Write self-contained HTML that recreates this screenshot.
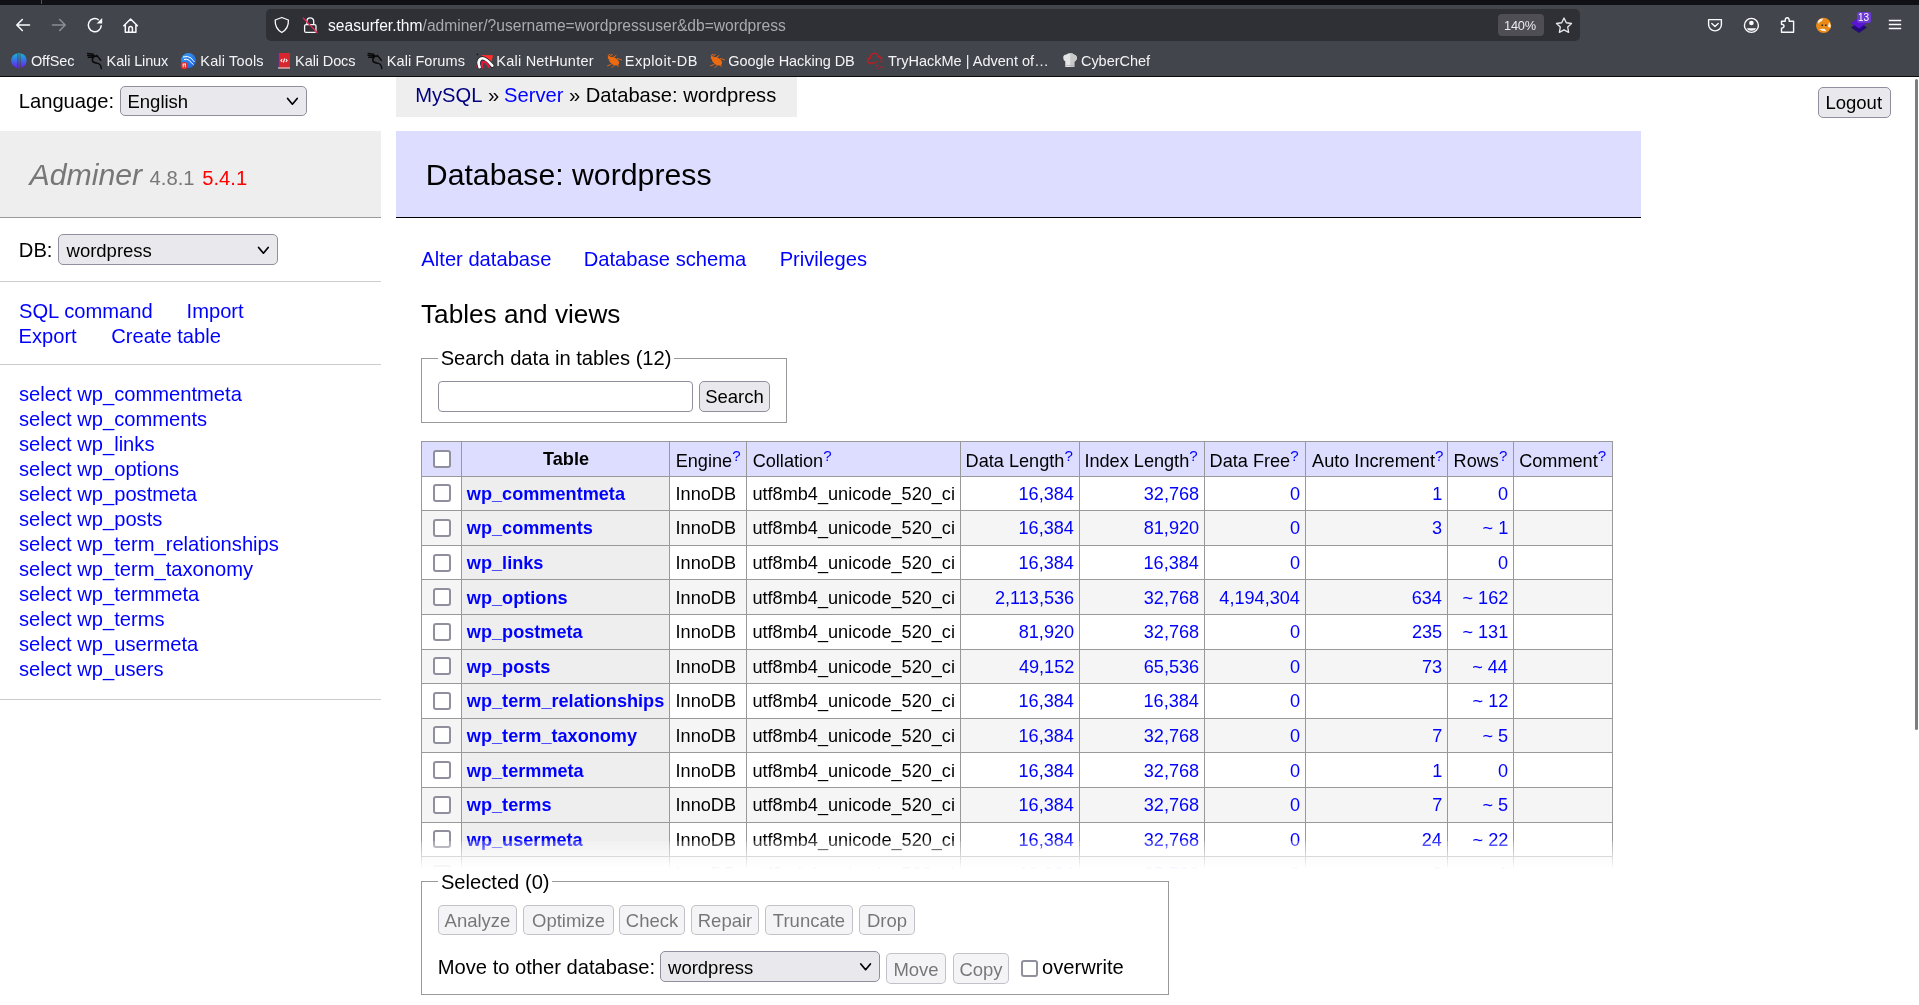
<!DOCTYPE html>
<html><head><meta charset="utf-8"><title>Adminer</title>
<style>
html,body{margin:0;padding:0;background:#fff;overflow:hidden;}
body{width:1919px;height:1005px;position:relative;font-family:"Liberation Sans",sans-serif;}
.t{position:absolute;white-space:pre;line-height:normal;font-family:"Liberation Sans",sans-serif;}
svg{position:absolute;overflow:visible;}
</style></head><body>

<div id="root" style="position:absolute;left:0;top:0;width:1919px;height:1005px;will-change:transform">
<div style="position:absolute;left:0px;top:0px;width:1919px;height:77px;background:#43454d"></div>
<div style="position:absolute;left:0px;top:0px;width:1919px;height:5px;background:#0f1015"></div>
<div style="position:absolute;left:0px;top:76px;width:1919px;height:1px;background:#0b0b0e"></div>
<div style="position:absolute;left:41px;top:0px;width:1px;height:4px;background:#55565c"></div>
<div style="position:absolute;left:266px;top:9px;width:1314px;height:32px;background:#2f3036;border-radius:5px"></div>
<div style="position:absolute;left:1498px;top:14px;width:46px;height:22px;background:#4e4e54;border-radius:4px"></div>
<div class="t" style="left:1504.03px;top:18.00px;font-size:12.80px;color:#ececee;letter-spacing:-0.2px;">140%</div>
<div class="t" style="left:328.07px;top:17.00px;font-size:15.60px;color:#fbfbfe;">seasurfer.thm</div>
<div class="t" style="left:422.57px;top:17.00px;font-size:15.6px;color:#a9a9ae">/adminer/?username=wordpressuser&amp;db=wordpress</div>
<svg style="left:0;top:0" width="1919" height="77" viewBox="0 0 1919 77"><g fill="none" stroke="#fbfbfe" stroke-width="1.6" stroke-linecap="round" stroke-linejoin="round"><path d="M16.8 25 H29.5 M22.3 19.5 L16.8 25 L22.3 30.5"/></g><g fill="none" stroke="#8c8d92" stroke-width="1.6" stroke-linecap="round" stroke-linejoin="round"><path d="M52.5 25 H65.2 M59.7 19.5 L65.2 25 L59.7 30.5"/></g><g fill="none" stroke="#fbfbfe" stroke-width="1.5"><path d="M101.3 25.3 A6.5 6.5 0 1 1 98.8 20.0"/></g><path fill="#fbfbfe" d="M102.2 18 L102.2 23.6 L96.6 23.6 Z"/><g fill="none" stroke="#fbfbfe" stroke-width="1.5" stroke-linejoin="round" stroke-linecap="round"><path d="M123.8 25.8 L130.6 19 L137.4 25.8 M125.3 24.5 V32.2 H135.9 V24.5 M128.8 32 V28.2 A1.8 1.8 0 0 1 132.4 28.2 V32"/></g><path fill="none" stroke="#fbfbfe" stroke-width="1.3" stroke-linejoin="round" d="M281.8 17.5 L275.2 20 Q274.8 28.5 281.8 32.5 Q288.8 28.5 288.4 20 Z"/><g fill="none" stroke="#fbfbfe" stroke-width="1.3"><rect x="304.6" y="24.6" width="11.4" height="7.8" rx="1.5"/><path d="M306.9 24.5 V21.2 A3.4 3.4 0 0 1 313.7 21.2 V24.5"/></g><path stroke="#e22850" stroke-width="1.3" d="M303 17.7 L317.5 33"/><path fill="none" stroke="#e6e6e8" stroke-width="1.35" stroke-linejoin="round" d="M1564.00 18.00 L1566.29 22.74 L1571.51 23.46 L1567.71 27.11 L1568.64 32.29 L1564.00 29.80 L1559.36 32.29 L1560.29 27.11 L1556.49 23.46 L1561.71 22.74 Z"/><g fill="none" stroke="#fbfbfe" stroke-width="1.4" stroke-linejoin="round" stroke-linecap="round"><path d="M1708.6 19.6 H1721.4 V24.5 A6.4 6.4 0 0 1 1708.6 24.5 Z"/><path d="M1711.8 23.6 L1715 26.6 L1718.2 23.6"/></g><g fill="none" stroke="#fbfbfe" stroke-width="1.4"><circle cx="1751.4" cy="25.4" r="7"/></g><circle cx="1751.4" cy="23" r="2.3" fill="#fbfbfe"/><path fill="#fbfbfe" d="M1746.5 28.3 H1756.3 Q1755 30.8 1751.4 30.8 Q1747.8 30.8 1746.5 28.3 Z"/><path fill="none" stroke="#fbfbfe" stroke-width="1.4" stroke-linejoin="round" d="M1781.5 32.3 V28.2 Q1784.2 27.8 1784 26.2 Q1784.2 24.6 1781.5 24.3 V21.3 H1785.2 Q1785 17.7 1787.2 17.7 Q1789.4 17.7 1789.2 21.3 H1793.6 V32.3 Z"/><g stroke="#fbfbfe" stroke-width="1.5"><path d="M1888.8 20.6 H1901.2 M1888.8 24.6 H1901.2 M1888.8 28.6 H1901.2"/></g><circle cx="1823.6" cy="25.4" r="7.6" fill="#e98a16"/><path fill="#f4f1ee" d="M1818 21 Q1820 18 1823 18.5 L1822 21 Q1819.5 21.5 1818.6 24 Z M1829.2 22 Q1831 24 1830.4 28 L1827.8 26.4 Z M1819 29 Q1822 31.5 1826.5 31.2 L1824.5 28.8 Z"/><path fill="#2b2b2b" d="M1821.5 24.5 h1.6 v1.4 h-1.6 Z M1825 24.5 h1.6 v1.4 h-1.6 Z"/><path fill="#230b78" d="M1859 22 L1867 27.5 L1859 33 L1851 27.5 Z"/><path fill="#5a14d6" d="M1859 17.4 L1867 22.9 L1859 28.4 L1851 22.9 Z"/></svg>
<div style="position:absolute;left:1857px;top:12px;width:14px;height:11px;background:#6b3ad0;border-radius:2px"></div>
<div class="t" style="left:1858.04px;top:12.00px;font-size:10.00px;color:#fff;">13</div>
<div class="t" style="left:30.91px;top:53.00px;font-size:14.50px;color:#f4f4f6;letter-spacing:-0.078px;">OffSec</div>
<div class="t" style="left:106.61px;top:53.00px;font-size:14.50px;color:#f4f4f6;letter-spacing:-0.136px;">Kali Linux</div>
<div class="t" style="left:200.31px;top:53.00px;font-size:14.50px;color:#f4f4f6;letter-spacing:0.169px;">Kali Tools</div>
<div class="t" style="left:295.11px;top:53.00px;font-size:14.50px;color:#f4f4f6;letter-spacing:-0.104px;">Kali Docs</div>
<div class="t" style="left:386.81px;top:53.00px;font-size:14.50px;color:#f4f4f6;letter-spacing:0.076px;">Kali Forums</div>
<div class="t" style="left:496.31px;top:53.00px;font-size:14.50px;color:#f4f4f6;letter-spacing:0.226px;">Kali NetHunter</div>
<div class="t" style="left:624.81px;top:53.00px;font-size:14.50px;color:#f4f4f6;letter-spacing:0.462px;">Exploit-DB</div>
<div class="t" style="left:728.27px;top:53.00px;font-size:14.50px;color:#f4f4f6;letter-spacing:-0.053px;">Google Hacking DB</div>
<div class="t" style="left:887.97px;top:53.00px;font-size:14.50px;color:#f4f4f6;letter-spacing:0.016px;">TryHackMe | Advent of…</div>
<div class="t" style="left:1080.96px;top:53.00px;font-size:14.50px;color:#f4f4f6;letter-spacing:-0.037px;">CyberChef</div>
<svg style="left:0;top:0" width="1200" height="77" viewBox="0 0 1200 77"><defs><linearGradient id="og" x1="0" y1="0" x2="0" y2="1"><stop offset="0" stop-color="#11b9d8"/><stop offset="1" stop-color="#6a1df0"/></linearGradient><linearGradient id="kt" x1="0" y1="0" x2="1" y2="1"><stop offset="0" stop-color="#3aa0f5"/><stop offset="1" stop-color="#1a5fe0"/></linearGradient></defs><path fill="url(#og)" d="M17.6 53.2 Q11.2 54.5 11.2 60.5 Q11.2 66 17.2 68 Z M20.4 53.2 Q26.6 54.5 26.6 60.5 Q26.6 66 20.8 68 Z"/><rect x="18.4" y="53" width="1.3" height="15.5" fill="url(#og)"/><path fill="none" stroke="#0a0a0a" stroke-width="1.45" stroke-linecap="round" stroke-linejoin="round" d="M87.6 53.5 L93.2 54.3 M87.6 55.5 L93.5 56 M88.4 57.4 L92.8 57 M92.6 54.6 Q95.5 56.8 97.2 56.2 M96.8 55.4 L100.8 60.3 M94.2 56.6 Q91.6 58.6 92.4 61 Q93.6 62.9 97.8 63.4 Q101.0 64.3 101.3 68.6"/><circle cx="188.5" cy="60.5" r="7.4" fill="url(#kt)"/><path fill="none" stroke="#fff" stroke-width="1" d="M183 57 Q188 55.5 191 58 Q193 60.5 194.5 62 M184 59.5 Q187 58.5 189.5 60.5 Q191 63 193.5 64.5"/><circle cx="184.3" cy="65.6" r="3.6" fill="#e22a2a"/><path stroke="#fff" stroke-width="0.9" d="M183.2 64 v3.3 M185.3 64 v3.3 M182.6 64 h3.4"/><rect x="277.5" y="53" width="12.5" height="15.3" fill="#d8262d"/><rect x="277.5" y="53" width="1.2" height="15.3" fill="#1f3e8a"/><rect x="278" y="67.5" width="12" height="1" fill="#eee"/><path fill="none" stroke="#fff" stroke-width="1.1" d="M282.2 59 L280.9 60.5 L282.2 62 M285.8 59 L287.1 60.5 L285.8 62 M284.6 58.5 L283.4 62.5"/><path fill="none" stroke="#0a0a0a" stroke-width="1.45" stroke-linecap="round" stroke-linejoin="round" d="M368.1 53.5 L373.7 54.3 M368.1 55.5 L374.0 56 M368.9 57.4 L373.3 57 M373.1 54.6 Q376.0 56.8 377.7 56.2 M377.3 55.4 L381.3 60.3 M374.7 56.6 Q372.1 58.6 372.9 61 Q374.1 62.9 378.3 63.4 Q381.5 64.3 381.8 68.6"/><path fill="#ff2d2d" d="M481.4 55 L493 55.2 L491 64 Z"/><circle cx="477.6" cy="66.6" r="1.4" fill="#d3123c"/><circle cx="477.4" cy="54.4" r="0.8" fill="#111"/><path fill="none" stroke="#1d1d22" stroke-width="4" stroke-linecap="round" d="M479.6 67.2 Q477.2 61.2 480.8 58.6 Q484.8 56.6 492.3 65.6"/><path fill="none" stroke="#ffffff" stroke-width="2.7" stroke-linecap="round" d="M479.6 67.2 Q477.2 61.2 480.8 58.6 Q484.8 56.6 492.3 65.6"/><path fill="none" stroke="#e3173f" stroke-width="2.1" stroke-linecap="round" d="M482.4 67.4 Q481.2 63.2 483.2 62 Q485.6 61.2 489.2 67"/><g transform="translate(0.0 0)"><ellipse cx="614" cy="61.2" rx="5.6" ry="3.5" transform="rotate(32 614 61.2)" fill="#ee6a10"/><ellipse cx="609.6" cy="58" rx="2" ry="1.6" transform="rotate(32 609.6 58)" fill="#ee6a10"/><path fill="none" stroke="#ee6a10" stroke-width="0.9" stroke-linecap="round" d="M608.3 56.8 Q607 55 610 54.2 M609.5 56.6 Q610 55 612.5 54.6 M611 64.5 L607.5 65.8 M614 65.5 L612 67.5 M617 63.5 L618.2 66.5 M617.5 58.5 L621.5 60 M612.5 58 L616 55.5"/></g><g transform="translate(103.0 0)"><ellipse cx="614" cy="61.2" rx="5.6" ry="3.5" transform="rotate(32 614 61.2)" fill="#ee6a10"/><ellipse cx="609.6" cy="58" rx="2" ry="1.6" transform="rotate(32 609.6 58)" fill="#ee6a10"/><path fill="none" stroke="#ee6a10" stroke-width="0.9" stroke-linecap="round" d="M608.3 56.8 Q607 55 610 54.2 M609.5 56.6 Q610 55 612.5 54.6 M611 64.5 L607.5 65.8 M614 65.5 L612 67.5 M617 63.5 L618.2 66.5 M617.5 58.5 L621.5 60 M612.5 58 L616 55.5"/></g><path fill="none" stroke="#c01c22" stroke-width="1.4" stroke-linejoin="round" d="M874.8 63 H869.6 Q867.5 63 867.6 60.5 Q867.7 58.2 870.3 58 Q870.6 53.4 874.5 53.4 Q877.8 53.4 878.3 56.8 Q881.6 57 881.8 60"/><g fill="#b02027"><rect x="876.2" y="60.8" width="1.6" height="1.6"/><rect x="880.3" y="60.8" width="2" height="1.6"/><rect x="875.2" y="65" width="3" height="1.4"/><rect x="880.2" y="66.5" width="2.5" height="1.4"/><rect x="877.5" y="68" width="1.4" height="1.2"/></g><path fill="#e4e4e4" d="M1065.3 67 V61.5 Q1063 60 1063.2 57.3 Q1063.6 54.4 1066.6 54.5 Q1068.2 52.8 1070.3 53.3 Q1072.2 52.8 1073.8 54.4 Q1076.3 54.6 1076.8 57 Q1077.6 59.6 1074.3 61.8 V67 Z"/><path fill="#c8c8c8" d="M1070.3 53.3 Q1072.2 52.8 1073.8 54.4 Q1076.3 54.6 1076.8 57 Q1077.6 59.6 1074.3 61.8 V67 H1070.3 Z"/><rect x="1065.3" y="65" width="9" height="0.8" fill="#b0b0b0"/></svg>
<div style="position:absolute;left:1915px;top:79px;width:3px;height:651px;background:#7a7e80;border-radius:2px"></div>
<div class="t" style="left:18.75px;top:90.00px;font-size:20.16px;color:#000;">Language:</div>
<div style="position:absolute;left:120px;top:86px;width:187px;height:30px;box-sizing:border-box;background:#e9e9ed;border:1px solid #8f8f9d;border-radius:5px"></div>
<div class="t" style="left:127.48px;top:91.00px;font-size:18.50px;color:#000;">English</div>
<svg style="left:0;top:0" width="1" height="1"><path fill="none" stroke="#000" stroke-width="1.7" stroke-linecap="round" stroke-linejoin="round" d="M287.6 98.5 L292.4 104.2 L297.2 98.5"/></svg>
<div style="position:absolute;left:0px;top:131px;width:381px;height:86px;background:#eee"></div>
<div style="position:absolute;left:0px;top:217px;width:381px;height:1px;background:#999"></div>
<div class="t" style="left:29.59px;top:158.00px;font-size:30.24px;color:#777;font-style:italic;">Adminer</div>
<div class="t" style="left:149.54px;top:167.00px;font-size:20.26px;color:#777;">4.8.1</div>
<div class="t" style="left:202.19px;top:167.00px;font-size:20.26px;color:#f00;">5.4.1</div>
<div class="t" style="left:18.85px;top:239.00px;font-size:20.16px;color:#000;">DB:</div>
<div style="position:absolute;left:58px;top:234px;width:220px;height:31px;box-sizing:border-box;background:#e9e9ed;border:1px solid #8f8f9d;border-radius:5px"></div>
<div class="t" style="left:66.53px;top:240.00px;font-size:18.50px;color:#000;">wordpress</div>
<svg style="left:0;top:0" width="1" height="1"><path fill="none" stroke="#000" stroke-width="1.7" stroke-linecap="round" stroke-linejoin="round" d="M258.6 247.5 L263.4 253.2 L268.2 247.5"/></svg>
<div style="position:absolute;left:0px;top:281px;width:381px;height:1px;background:#ccc"></div>
<div class="t" style="left:18.98px;top:300.00px;font-size:20.16px;color:#0000ff;">SQL command</div>
<div class="t" style="left:186.54px;top:300.00px;font-size:20.16px;color:#0000ff;">Import</div>
<div class="t" style="left:18.45px;top:325.00px;font-size:20.16px;color:#0000ff;">Export</div>
<div class="t" style="left:111.18px;top:325.00px;font-size:20.16px;color:#0000ff;">Create table</div>
<div style="position:absolute;left:0px;top:364px;width:381px;height:1px;background:#ccc"></div>
<div class="t" style="left:18.94px;top:383.00px;font-size:20.16px;color:#0000ff;">select wp_commentmeta</div>
<div class="t" style="left:18.94px;top:408.00px;font-size:20.16px;color:#0000ff;">select wp_comments</div>
<div class="t" style="left:18.94px;top:433.00px;font-size:20.16px;color:#0000ff;">select wp_links</div>
<div class="t" style="left:18.94px;top:458.00px;font-size:20.16px;color:#0000ff;">select wp_options</div>
<div class="t" style="left:18.94px;top:483.00px;font-size:20.16px;color:#0000ff;">select wp_postmeta</div>
<div class="t" style="left:18.94px;top:508.00px;font-size:20.16px;color:#0000ff;">select wp_posts</div>
<div class="t" style="left:18.94px;top:533.00px;font-size:20.16px;color:#0000ff;">select wp_term_relationships</div>
<div class="t" style="left:18.94px;top:558.00px;font-size:20.16px;color:#0000ff;">select wp_term_taxonomy</div>
<div class="t" style="left:18.94px;top:583.00px;font-size:20.16px;color:#0000ff;">select wp_termmeta</div>
<div class="t" style="left:18.94px;top:608.00px;font-size:20.16px;color:#0000ff;">select wp_terms</div>
<div class="t" style="left:18.94px;top:633.00px;font-size:20.16px;color:#0000ff;">select wp_usermeta</div>
<div class="t" style="left:18.94px;top:658.00px;font-size:20.16px;color:#0000ff;">select wp_users</div>
<div style="position:absolute;left:0px;top:699px;width:381px;height:1px;background:#ccc"></div>
<div style="position:absolute;left:396px;top:77px;width:401px;height:40px;background:#eee"></div>
<div class="t" style="left:415.15px;top:84.00px;font-size:20.16px;color:#000080;">MySQL</div>
<div class="t" style="left:482.36px;top:84.00px;font-size:20.16px"> » </div>
<div class="t" style="left:504.03px;top:84.00px;font-size:20.16px;color:#00f">Server</div>
<div class="t" style="left:563.40px;top:84.00px;font-size:20.16px"> » Database: wordpress</div>
<div style="position:absolute;left:1818px;top:87px;width:73px;height:31px;box-sizing:border-box;background:#e9e9ed;border:1px solid #8f8f9d;border-radius:5px"></div>
<div class="t" style="left:1825.48px;top:92.00px;font-size:18.50px;color:#000;">Logout</div>
<div style="position:absolute;left:396px;top:131px;width:1245px;height:86px;background:#ddf"></div>
<div style="position:absolute;left:396px;top:217px;width:1245px;height:1px;background:#000"></div>
<div class="t" style="left:425.82px;top:158.00px;font-size:30.24px;color:#000;">Database: wordpress</div>
<div class="t" style="left:421.36px;top:248.00px;font-size:20.16px;color:#0000ff;">Alter database</div>
<div class="t" style="left:583.75px;top:248.00px;font-size:20.16px;color:#0000ff;">Database schema</div>
<div class="t" style="left:779.65px;top:248.00px;font-size:20.16px;color:#0000ff;">Privileges</div>
<div class="t" style="left:421.01px;top:299.00px;font-size:26.20px;color:#000;">Tables and views</div>
<div style="position:absolute;left:421px;top:358px;width:366px;height:65px;box-sizing:border-box;border:1px solid #999"></div>
<div style="position:absolute;left:437.88px;top:350px;width:236.46px;height:10px;background:#fff"></div>
<div class="t" style="left:440.68px;top:347.00px;font-size:20.16px;color:#000;">Search data in tables (12)</div>
<div style="position:absolute;left:438px;top:381px;width:255px;height:31px;box-sizing:border-box;background:#fff;border:1px solid #8f8f9d;border-radius:4px"></div>
<div style="position:absolute;left:699px;top:381px;width:71px;height:31px;box-sizing:border-box;background:#e9e9ed;border:1px solid #8f8f9d;border-radius:5px"></div>
<div class="t" style="left:705.16px;top:386.00px;font-size:18.50px;color:#000;">Search</div>
<div style="position:absolute;left:421px;top:441px;width:1191px;height:35px;background:#ddf"></div>
<div style="position:absolute;left:461px;top:476px;width:208px;height:34px;background:#eee"></div>
<div style="position:absolute;left:421px;top:510px;width:1191px;height:35px;background:#f5f5f5"></div>
<div style="position:absolute;left:461px;top:510px;width:208px;height:35px;background:#eee"></div>
<div style="position:absolute;left:461px;top:545px;width:208px;height:34px;background:#eee"></div>
<div style="position:absolute;left:421px;top:579px;width:1191px;height:35px;background:#f5f5f5"></div>
<div style="position:absolute;left:461px;top:579px;width:208px;height:35px;background:#eee"></div>
<div style="position:absolute;left:461px;top:614px;width:208px;height:35px;background:#eee"></div>
<div style="position:absolute;left:421px;top:649px;width:1191px;height:34px;background:#f5f5f5"></div>
<div style="position:absolute;left:461px;top:649px;width:208px;height:34px;background:#eee"></div>
<div style="position:absolute;left:461px;top:683px;width:208px;height:35px;background:#eee"></div>
<div style="position:absolute;left:421px;top:718px;width:1191px;height:34px;background:#f5f5f5"></div>
<div style="position:absolute;left:461px;top:718px;width:208px;height:34px;background:#eee"></div>
<div style="position:absolute;left:461px;top:752px;width:208px;height:35px;background:#eee"></div>
<div style="position:absolute;left:421px;top:787px;width:1191px;height:35px;background:#f5f5f5"></div>
<div style="position:absolute;left:461px;top:787px;width:208px;height:35px;background:#eee"></div>
<div style="position:absolute;left:461px;top:822px;width:208px;height:34px;background:#eee"></div>
<div style="position:absolute;left:421px;top:856px;width:1191px;height:35px;background:#f5f5f5"></div>
<div style="position:absolute;left:461px;top:856px;width:208px;height:35px;background:#eee"></div>
<div style="position:absolute;left:421px;top:441px;width:1px;height:451px;background:#999"></div>
<div style="position:absolute;left:461px;top:441px;width:1px;height:451px;background:#999"></div>
<div style="position:absolute;left:669px;top:441px;width:1px;height:451px;background:#999"></div>
<div style="position:absolute;left:746px;top:441px;width:1px;height:451px;background:#999"></div>
<div style="position:absolute;left:960px;top:441px;width:1px;height:451px;background:#999"></div>
<div style="position:absolute;left:1079px;top:441px;width:1px;height:451px;background:#999"></div>
<div style="position:absolute;left:1204px;top:441px;width:1px;height:451px;background:#999"></div>
<div style="position:absolute;left:1305px;top:441px;width:1px;height:451px;background:#999"></div>
<div style="position:absolute;left:1447px;top:441px;width:1px;height:451px;background:#999"></div>
<div style="position:absolute;left:1513px;top:441px;width:1px;height:451px;background:#999"></div>
<div style="position:absolute;left:1612px;top:441px;width:1px;height:451px;background:#999"></div>
<div style="position:absolute;left:421px;top:441px;width:1192px;height:1px;background:#999"></div>
<div style="position:absolute;left:421px;top:476px;width:1192px;height:1px;background:#999"></div>
<div style="position:absolute;left:421px;top:510px;width:1192px;height:1px;background:#999"></div>
<div style="position:absolute;left:421px;top:545px;width:1192px;height:1px;background:#999"></div>
<div style="position:absolute;left:421px;top:579px;width:1192px;height:1px;background:#999"></div>
<div style="position:absolute;left:421px;top:614px;width:1192px;height:1px;background:#999"></div>
<div style="position:absolute;left:421px;top:649px;width:1192px;height:1px;background:#999"></div>
<div style="position:absolute;left:421px;top:683px;width:1192px;height:1px;background:#999"></div>
<div style="position:absolute;left:421px;top:718px;width:1192px;height:1px;background:#999"></div>
<div style="position:absolute;left:421px;top:752px;width:1192px;height:1px;background:#999"></div>
<div style="position:absolute;left:421px;top:787px;width:1192px;height:1px;background:#999"></div>
<div style="position:absolute;left:421px;top:822px;width:1192px;height:1px;background:#999"></div>
<div style="position:absolute;left:421px;top:856px;width:1192px;height:1px;background:#999"></div>
<div style="position:absolute;left:421px;top:891px;width:1192px;height:1px;background:#999"></div>
<div style="position:absolute;left:433px;top:450px;width:18px;height:18px;box-sizing:border-box;background:#fff;border:2px solid #8f8f9d;border-radius:3px"></div>
<div class="t" style="left:543.00px;top:449.00px;font-size:18.14px;color:#000;font-weight:bold;">Table</div>
<div class="t" style="left:675.71px;top:451.00px;font-size:18.14px;color:#000;">Engine</div>
<div class="t" style="left:732.20px;top:447.00px;font-size:15.1px;color:#00f">?</div>
<div class="t" style="left:752.68px;top:451.00px;font-size:18.14px;color:#000;">Collation</div>
<div class="t" style="left:823.26px;top:447.00px;font-size:15.1px;color:#00f">?</div>
<div class="t" style="left:965.61px;top:451.00px;font-size:18.14px;color:#000;">Data Length</div>
<div class="t" style="left:1064.45px;top:447.00px;font-size:15.1px;color:#00f">?</div>
<div class="t" style="left:1084.43px;top:451.00px;font-size:18.14px;color:#000;">Index Length</div>
<div class="t" style="left:1189.32px;top:447.00px;font-size:15.1px;color:#00f">?</div>
<div class="t" style="left:1209.61px;top:451.00px;font-size:18.14px;color:#000;">Data Free</div>
<div class="t" style="left:1290.27px;top:447.00px;font-size:15.1px;color:#00f">?</div>
<div class="t" style="left:1312.06px;top:451.00px;font-size:18.14px;color:#000;">Auto Increment</div>
<div class="t" style="left:1435.08px;top:447.00px;font-size:15.1px;color:#00f">?</div>
<div class="t" style="left:1453.61px;top:451.00px;font-size:18.14px;color:#000;">Rows</div>
<div class="t" style="left:1498.97px;top:447.00px;font-size:15.1px;color:#00f">?</div>
<div class="t" style="left:1519.18px;top:451.00px;font-size:18.14px;color:#000;">Comment</div>
<div class="t" style="left:1597.81px;top:447.00px;font-size:15.1px;color:#00f">?</div>
<div style="position:absolute;left:433px;top:484px;width:18px;height:18px;box-sizing:border-box;background:#fff;border:2px solid #8f8f9d;border-radius:3px"></div>
<div class="t" style="left:466.85px;top:484.00px;font-size:18.14px;color:#0000ff;font-weight:bold;">wp_commentmeta</div>
<div class="t" style="left:675.53px;top:484.00px;font-size:18.14px;color:#000;">InnoDB</div>
<div class="t" style="left:752.42px;top:484.00px;font-size:18.14px;color:#000;">utf8mb4_unicode_520_ci</div>
<div class="t" style="right:845.07px;top:484.00px;font-size:18.14px;color:#0000ff;">16,384</div>
<div class="t" style="right:719.81px;top:484.00px;font-size:18.14px;color:#0000ff;">32,768</div>
<div class="t" style="right:618.89px;top:484.00px;font-size:18.14px;color:#0000ff;">0</div>
<div class="t" style="right:476.71px;top:484.00px;font-size:18.14px;color:#0000ff;">1</div>
<div class="t" style="right:410.89px;top:484.00px;font-size:18.14px;color:#0000ff;">0</div>
<div style="position:absolute;left:433px;top:519px;width:18px;height:18px;box-sizing:border-box;background:#fff;border:2px solid #8f8f9d;border-radius:3px"></div>
<div class="t" style="left:466.85px;top:518.00px;font-size:18.14px;color:#0000ff;font-weight:bold;">wp_comments</div>
<div class="t" style="left:675.53px;top:518.00px;font-size:18.14px;color:#000;">InnoDB</div>
<div class="t" style="left:752.42px;top:518.00px;font-size:18.14px;color:#000;">utf8mb4_unicode_520_ci</div>
<div class="t" style="right:845.07px;top:518.00px;font-size:18.14px;color:#0000ff;">16,384</div>
<div class="t" style="right:719.89px;top:518.00px;font-size:18.14px;color:#0000ff;">81,920</div>
<div class="t" style="right:618.89px;top:518.00px;font-size:18.14px;color:#0000ff;">0</div>
<div class="t" style="right:476.80px;top:518.00px;font-size:18.14px;color:#0000ff;">3</div>
<div class="t" style="right:410.71px;top:518.00px;font-size:18.14px;color:#0000ff;">~ 1</div>
<div style="position:absolute;left:433px;top:554px;width:18px;height:18px;box-sizing:border-box;background:#fff;border:2px solid #8f8f9d;border-radius:3px"></div>
<div class="t" style="left:466.85px;top:553.00px;font-size:18.14px;color:#0000ff;font-weight:bold;">wp_links</div>
<div class="t" style="left:675.53px;top:553.00px;font-size:18.14px;color:#000;">InnoDB</div>
<div class="t" style="left:752.42px;top:553.00px;font-size:18.14px;color:#000;">utf8mb4_unicode_520_ci</div>
<div class="t" style="right:845.07px;top:553.00px;font-size:18.14px;color:#0000ff;">16,384</div>
<div class="t" style="right:720.07px;top:553.00px;font-size:18.14px;color:#0000ff;">16,384</div>
<div class="t" style="right:618.89px;top:553.00px;font-size:18.14px;color:#0000ff;">0</div>
<div class="t" style="right:410.89px;top:553.00px;font-size:18.14px;color:#0000ff;">0</div>
<div style="position:absolute;left:433px;top:588px;width:18px;height:18px;box-sizing:border-box;background:#fff;border:2px solid #8f8f9d;border-radius:3px"></div>
<div class="t" style="left:466.85px;top:588.00px;font-size:18.14px;color:#0000ff;font-weight:bold;">wp_options</div>
<div class="t" style="left:675.53px;top:588.00px;font-size:18.14px;color:#000;">InnoDB</div>
<div class="t" style="left:752.42px;top:588.00px;font-size:18.14px;color:#000;">utf8mb4_unicode_520_ci</div>
<div class="t" style="right:844.80px;top:588.00px;font-size:18.14px;color:#0000ff;">2,113,536</div>
<div class="t" style="right:719.81px;top:588.00px;font-size:18.14px;color:#0000ff;">32,768</div>
<div class="t" style="right:619.07px;top:588.00px;font-size:18.14px;color:#0000ff;">4,194,304</div>
<div class="t" style="right:477.07px;top:588.00px;font-size:18.14px;color:#0000ff;">634</div>
<div class="t" style="right:410.69px;top:588.00px;font-size:18.14px;color:#0000ff;">~ 162</div>
<div style="position:absolute;left:433px;top:623px;width:18px;height:18px;box-sizing:border-box;background:#fff;border:2px solid #8f8f9d;border-radius:3px"></div>
<div class="t" style="left:466.85px;top:622.00px;font-size:18.14px;color:#0000ff;font-weight:bold;">wp_postmeta</div>
<div class="t" style="left:675.53px;top:622.00px;font-size:18.14px;color:#000;">InnoDB</div>
<div class="t" style="left:752.42px;top:622.00px;font-size:18.14px;color:#000;">utf8mb4_unicode_520_ci</div>
<div class="t" style="right:844.89px;top:622.00px;font-size:18.14px;color:#0000ff;">81,920</div>
<div class="t" style="right:719.81px;top:622.00px;font-size:18.14px;color:#0000ff;">32,768</div>
<div class="t" style="right:618.89px;top:622.00px;font-size:18.14px;color:#0000ff;">0</div>
<div class="t" style="right:476.84px;top:622.00px;font-size:18.14px;color:#0000ff;">235</div>
<div class="t" style="right:410.71px;top:622.00px;font-size:18.14px;color:#0000ff;">~ 131</div>
<div style="position:absolute;left:433px;top:657px;width:18px;height:18px;box-sizing:border-box;background:#fff;border:2px solid #8f8f9d;border-radius:3px"></div>
<div class="t" style="left:466.85px;top:657.00px;font-size:18.14px;color:#0000ff;font-weight:bold;">wp_posts</div>
<div class="t" style="left:675.53px;top:657.00px;font-size:18.14px;color:#000;">InnoDB</div>
<div class="t" style="left:752.42px;top:657.00px;font-size:18.14px;color:#000;">utf8mb4_unicode_520_ci</div>
<div class="t" style="right:844.69px;top:657.00px;font-size:18.14px;color:#0000ff;">49,152</div>
<div class="t" style="right:719.80px;top:657.00px;font-size:18.14px;color:#0000ff;">65,536</div>
<div class="t" style="right:618.89px;top:657.00px;font-size:18.14px;color:#0000ff;">0</div>
<div class="t" style="right:476.80px;top:657.00px;font-size:18.14px;color:#0000ff;">73</div>
<div class="t" style="right:411.07px;top:657.00px;font-size:18.14px;color:#0000ff;">~ 44</div>
<div style="position:absolute;left:433px;top:692px;width:18px;height:18px;box-sizing:border-box;background:#fff;border:2px solid #8f8f9d;border-radius:3px"></div>
<div class="t" style="left:466.85px;top:691.00px;font-size:18.14px;color:#0000ff;font-weight:bold;">wp_term_relationships</div>
<div class="t" style="left:675.53px;top:691.00px;font-size:18.14px;color:#000;">InnoDB</div>
<div class="t" style="left:752.42px;top:691.00px;font-size:18.14px;color:#000;">utf8mb4_unicode_520_ci</div>
<div class="t" style="right:845.07px;top:691.00px;font-size:18.14px;color:#0000ff;">16,384</div>
<div class="t" style="right:720.07px;top:691.00px;font-size:18.14px;color:#0000ff;">16,384</div>
<div class="t" style="right:618.89px;top:691.00px;font-size:18.14px;color:#0000ff;">0</div>
<div class="t" style="right:410.69px;top:691.00px;font-size:18.14px;color:#0000ff;">~ 12</div>
<div style="position:absolute;left:433px;top:726px;width:18px;height:18px;box-sizing:border-box;background:#fff;border:2px solid #8f8f9d;border-radius:3px"></div>
<div class="t" style="left:466.85px;top:726.00px;font-size:18.14px;color:#0000ff;font-weight:bold;">wp_term_taxonomy</div>
<div class="t" style="left:675.53px;top:726.00px;font-size:18.14px;color:#000;">InnoDB</div>
<div class="t" style="left:752.42px;top:726.00px;font-size:18.14px;color:#000;">utf8mb4_unicode_520_ci</div>
<div class="t" style="right:845.07px;top:726.00px;font-size:18.14px;color:#0000ff;">16,384</div>
<div class="t" style="right:719.81px;top:726.00px;font-size:18.14px;color:#0000ff;">32,768</div>
<div class="t" style="right:618.89px;top:726.00px;font-size:18.14px;color:#0000ff;">0</div>
<div class="t" style="right:476.69px;top:726.00px;font-size:18.14px;color:#0000ff;">7</div>
<div class="t" style="right:410.84px;top:726.00px;font-size:18.14px;color:#0000ff;">~ 5</div>
<div style="position:absolute;left:433px;top:761px;width:18px;height:18px;box-sizing:border-box;background:#fff;border:2px solid #8f8f9d;border-radius:3px"></div>
<div class="t" style="left:466.85px;top:761.00px;font-size:18.14px;color:#0000ff;font-weight:bold;">wp_termmeta</div>
<div class="t" style="left:675.53px;top:761.00px;font-size:18.14px;color:#000;">InnoDB</div>
<div class="t" style="left:752.42px;top:761.00px;font-size:18.14px;color:#000;">utf8mb4_unicode_520_ci</div>
<div class="t" style="right:845.07px;top:761.00px;font-size:18.14px;color:#0000ff;">16,384</div>
<div class="t" style="right:719.81px;top:761.00px;font-size:18.14px;color:#0000ff;">32,768</div>
<div class="t" style="right:618.89px;top:761.00px;font-size:18.14px;color:#0000ff;">0</div>
<div class="t" style="right:476.71px;top:761.00px;font-size:18.14px;color:#0000ff;">1</div>
<div class="t" style="right:410.89px;top:761.00px;font-size:18.14px;color:#0000ff;">0</div>
<div style="position:absolute;left:433px;top:796px;width:18px;height:18px;box-sizing:border-box;background:#fff;border:2px solid #8f8f9d;border-radius:3px"></div>
<div class="t" style="left:466.85px;top:795.00px;font-size:18.14px;color:#0000ff;font-weight:bold;">wp_terms</div>
<div class="t" style="left:675.53px;top:795.00px;font-size:18.14px;color:#000;">InnoDB</div>
<div class="t" style="left:752.42px;top:795.00px;font-size:18.14px;color:#000;">utf8mb4_unicode_520_ci</div>
<div class="t" style="right:845.07px;top:795.00px;font-size:18.14px;color:#0000ff;">16,384</div>
<div class="t" style="right:719.81px;top:795.00px;font-size:18.14px;color:#0000ff;">32,768</div>
<div class="t" style="right:618.89px;top:795.00px;font-size:18.14px;color:#0000ff;">0</div>
<div class="t" style="right:476.69px;top:795.00px;font-size:18.14px;color:#0000ff;">7</div>
<div class="t" style="right:410.84px;top:795.00px;font-size:18.14px;color:#0000ff;">~ 5</div>
<div style="position:absolute;left:433px;top:830px;width:18px;height:18px;box-sizing:border-box;background:#fff;border:2px solid #8f8f9d;border-radius:3px"></div>
<div class="t" style="left:466.85px;top:830.00px;font-size:18.14px;color:#0000ff;font-weight:bold;">wp_usermeta</div>
<div class="t" style="left:675.53px;top:830.00px;font-size:18.14px;color:#000;">InnoDB</div>
<div class="t" style="left:752.42px;top:830.00px;font-size:18.14px;color:#000;">utf8mb4_unicode_520_ci</div>
<div class="t" style="right:845.07px;top:830.00px;font-size:18.14px;color:#0000ff;">16,384</div>
<div class="t" style="right:719.81px;top:830.00px;font-size:18.14px;color:#0000ff;">32,768</div>
<div class="t" style="right:618.89px;top:830.00px;font-size:18.14px;color:#0000ff;">0</div>
<div class="t" style="right:477.07px;top:830.00px;font-size:18.14px;color:#0000ff;">24</div>
<div class="t" style="right:410.69px;top:830.00px;font-size:18.14px;color:#0000ff;">~ 22</div>
<div style="position:absolute;left:433px;top:865px;width:18px;height:18px;box-sizing:border-box;background:#fff;border:2px solid #8f8f9d;border-radius:3px"></div>
<div class="t" style="left:466.85px;top:864.00px;font-size:18.14px;color:#0000ff;font-weight:bold;">wp_users</div>
<div class="t" style="left:675.53px;top:864.00px;font-size:18.14px;color:#000;">InnoDB</div>
<div class="t" style="left:752.42px;top:864.00px;font-size:18.14px;color:#000;">utf8mb4_unicode_520_ci</div>
<div class="t" style="right:845.07px;top:864.00px;font-size:18.14px;color:#0000ff;">16,384</div>
<div class="t" style="right:719.80px;top:864.00px;font-size:18.14px;color:#0000ff;">65,536</div>
<div class="t" style="right:618.89px;top:864.00px;font-size:18.14px;color:#0000ff;">0</div>
<div class="t" style="right:476.69px;top:864.00px;font-size:18.14px;color:#0000ff;">2</div>
<div class="t" style="right:410.71px;top:864.00px;font-size:18.14px;color:#0000ff;">~ 1</div>
<div style="position:absolute;left:396px;top:841px;width:1275px;height:28px;background:linear-gradient(rgba(255,255,255,.2),#fff)"></div>
<div style="position:absolute;left:396px;top:869px;width:1275px;height:136px;background:#fff"></div>
<div style="position:absolute;left:421px;top:881px;width:748px;height:114px;box-sizing:border-box;border:1px solid #999"></div>
<div style="position:absolute;left:438.08px;top:872px;width:114.3px;height:14px;background:#fff"></div>
<div class="t" style="left:440.88px;top:871.00px;font-size:20.16px;color:#000;">Selected (0)</div>
<div style="position:absolute;left:438px;top:905px;width:79px;height:30px;box-sizing:border-box;background:rgba(233,233,237,.5);border:1px solid rgba(143,143,157,.5);border-radius:5px"></div>
<div class="t" style="left:444.59px;top:910.00px;font-size:18.50px;color:rgba(0,0,0,.52);">Analyze</div>
<div style="position:absolute;left:523px;top:905px;width:91px;height:30px;box-sizing:border-box;background:rgba(233,233,237,.5);border:1px solid rgba(143,143,157,.5);border-radius:5px"></div>
<div class="t" style="left:532.01px;top:910.00px;font-size:18.50px;color:rgba(0,0,0,.52);">Optimize</div>
<div style="position:absolute;left:619px;top:905px;width:66px;height:30px;box-sizing:border-box;background:rgba(233,233,237,.5);border:1px solid rgba(143,143,157,.5);border-radius:5px"></div>
<div class="t" style="left:625.78px;top:910.00px;font-size:18.50px;color:rgba(0,0,0,.52);">Check</div>
<div style="position:absolute;left:691px;top:905px;width:68px;height:30px;box-sizing:border-box;background:rgba(233,233,237,.5);border:1px solid rgba(143,143,157,.5);border-radius:5px"></div>
<div class="t" style="left:697.75px;top:910.00px;font-size:18.50px;color:rgba(0,0,0,.52);">Repair</div>
<div style="position:absolute;left:765px;top:905px;width:88px;height:30px;box-sizing:border-box;background:rgba(233,233,237,.5);border:1px solid rgba(143,143,157,.5);border-radius:5px"></div>
<div class="t" style="left:772.84px;top:910.00px;font-size:18.50px;color:rgba(0,0,0,.52);">Truncate</div>
<div style="position:absolute;left:859px;top:905px;width:56px;height:30px;box-sizing:border-box;background:rgba(233,233,237,.5);border:1px solid rgba(143,143,157,.5);border-radius:5px"></div>
<div class="t" style="left:866.95px;top:910.00px;font-size:18.50px;color:rgba(0,0,0,.52);">Drop</div>
<div class="t" style="left:437.75px;top:956.00px;font-size:20.16px;color:#000;">Move to other database:</div>
<div style="position:absolute;left:660px;top:951px;width:220px;height:31px;box-sizing:border-box;background:#e9e9ed;border:1px solid #8f8f9d;border-radius:5px"></div>
<div class="t" style="left:668.03px;top:957.00px;font-size:18.50px;color:#000;">wordpress</div>
<svg style="left:0;top:0" width="1" height="1"><path fill="none" stroke="#000" stroke-width="1.7" stroke-linecap="round" stroke-linejoin="round" d="M860.8 964.0 L865.6 969.7 L870.4 964.0"/></svg>
<div style="position:absolute;left:886px;top:953px;width:60px;height:31px;box-sizing:border-box;background:rgba(233,233,237,.5);border:1px solid rgba(143,143,157,.5);border-radius:5px"></div>
<div class="t" style="left:893.38px;top:959.00px;font-size:18.50px;color:rgba(0,0,0,.52);">Move</div>
<div style="position:absolute;left:953px;top:953px;width:56px;height:31px;box-sizing:border-box;background:rgba(233,233,237,.5);border:1px solid rgba(143,143,157,.5);border-radius:5px"></div>
<div class="t" style="left:959.41px;top:959.00px;font-size:18.50px;color:rgba(0,0,0,.52);">Copy</div>
<div style="position:absolute;left:1021px;top:960px;width:17px;height:17px;box-sizing:border-box;background:#fff;border:2px solid #8f8f9d;border-radius:3px"></div>
<div class="t" style="left:1041.95px;top:956.00px;font-size:20.16px;color:#000;">overwrite</div>
</div></body></html>
